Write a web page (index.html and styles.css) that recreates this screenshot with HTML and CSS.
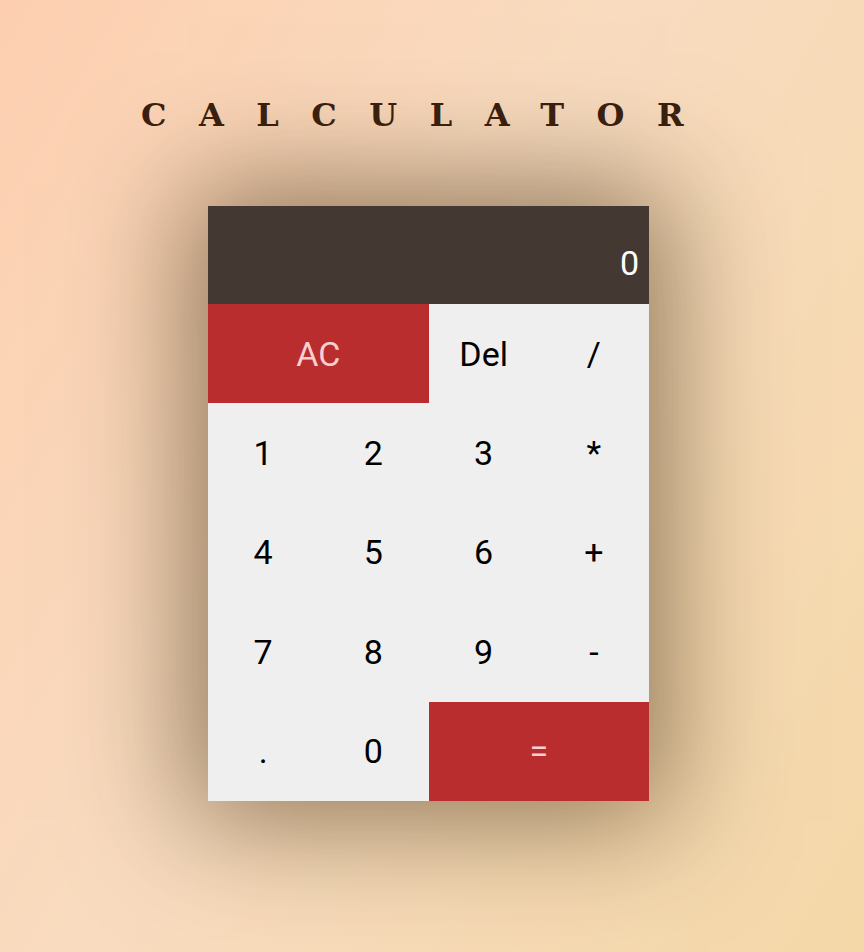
FILE: index.html
```html
<!DOCTYPE html>
<html lang="en">
<head>
<meta charset="utf-8">
<title>Calculator</title>
<link rel="stylesheet" href="styles.css">
</head>
<body>
<main class="page">
  <h1 class="title">CALCULATOR</h1>
  <div class="calc">
    <div class="display">0</div>
    <button class="key key-red span-2">AC</button>
    <button class="key">Del</button>
    <button class="key">/</button>
    <button class="key">1</button>
    <button class="key">2</button>
    <button class="key">3</button>
    <button class="key">*</button>
    <button class="key">4</button>
    <button class="key">5</button>
    <button class="key">6</button>
    <button class="key">+</button>
    <button class="key">7</button>
    <button class="key">8</button>
    <button class="key">9</button>
    <button class="key">-</button>
    <button class="key">.</button>
    <button class="key">0</button>
    <button class="key key-red span-2">=</button>
  </div>
</main>
</body>
</html>
```
FILE: styles.css
```css
* { box-sizing: border-box; }
html, body { margin: 0; padding: 0; }
body {
  min-height: 952px;
  background: linear-gradient(120deg, #fdcfb0 0%, #f9dcc0 45%, #f4d8a8 100%);
  font-family: Roboto, "Liberation Sans", sans-serif;
}
.page {
  display: flex;
  flex-direction: column;
  align-items: center;
  padding-top: 95px;
  padding-right: 7px;
}
.title {
  margin: 0;
  font-family: "DejaVu Serif", "Liberation Serif", serif;
  font-weight: bold;
  font-size: 32px;
  line-height: 40px;
  letter-spacing: 32.5px;
  color: #3a2010;
}
.calc {
  margin-top: 71px;
  width: 441px;
  display: grid;
  grid-template-columns: repeat(4, 1fr);
  grid-template-rows: 98px repeat(5, 99.4px);
  box-shadow: 0 0 110px 20px rgba(60, 40, 10, 0.55);
  background: #efefef;
}
.display {
  grid-column: 1 / -1;
  background: #433832;
  color: #ffffff;
  font-size: 34px;
  display: flex;
  justify-content: flex-end;
  align-items: flex-end;
  padding: 0 10px 21px;
  line-height: 40px;
}
.key {
  border: 0;
  margin: 0;
  padding: 0;
  background: #efefef;
  color: #000;
  font-family: Roboto, "Liberation Sans", sans-serif;
  font-size: 34px;
  cursor: pointer;
}
.key-red {
  background: #b92d2e;
  color: #f8d0d0;
}
.span-2 { grid-column: span 2; }
```
